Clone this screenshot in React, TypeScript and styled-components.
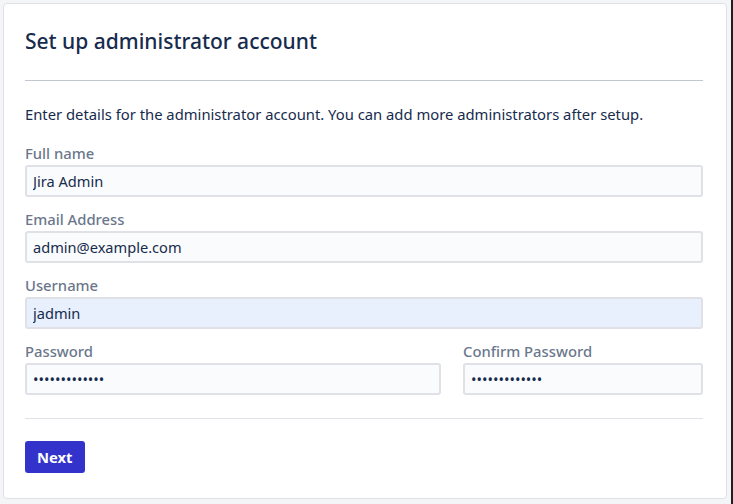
import React from "react";
import styled, { createGlobalStyle } from "styled-components";

const GlobalStyle = createGlobalStyle`
  html, body {
    margin: 0;
    padding: 0;
    background: #f4f5f7;
  }
  body {
    font-family: "Noto Sans", "Open Sans", sans-serif;
    color: #172b4d;
  }
`;

const Page = styled.div`
  box-sizing: border-box;
  width: 733px;
  height: 504px;
  padding: 3px 4px 5px 3px;
  border-right: 2px solid #1f1f1f;
`;

const Card = styled.section`
  box-sizing: border-box;
  height: 100%;
  background: #fff;
  border: 1px solid #dfe1e6;
  border-radius: 4px;
  padding: 25px 23px 25px 21px;
`;

const Title = styled.h1`
  margin: 0;
  font-size: 21px;
  line-height: 24px;
  font-weight: 500;
  color: #172b4d;
`;

const Divider = styled.hr<{ $tone?: "strong" | "soft" }>`
  align-self: stretch;
  border: 0;
  height: 1px;
  margin: 0;
  background: ${(p) => (p.$tone === "soft" ? "#dfe1e6" : "#c1c7d0")};
`;

const Header = styled.header`
  display: flex;
  flex-direction: column;
  gap: 27px;
  margin-bottom: 23px;
`;

const Intro = styled.p`
  margin: 0 0 19px;
  font-size: 14.8px;
  line-height: 20px;
  color: #172b4d;
`;

const Form = styled.form`
  display: flex;
  flex-direction: column;
  gap: 12px;
`;

const Row = styled.div`
  display: flex;
  gap: 22px;
`;

const Field = styled.label<{ $width?: number }>`
  display: flex;
  flex-direction: column;
  gap: 2px;
  flex: ${(p) => (p.$width ? `0 0 ${p.$width}px` : "1 1 auto")};
`;

const Label = styled.span`
  font-size: 14.8px;
  line-height: 20px;
  font-weight: 500;
  color: #6b778c;
`;

const Input = styled.input<{ $filled?: boolean }>`
  box-sizing: border-box;
  width: 100%;
  height: 32px;
  padding: 0 6px;
  border: 2px solid #dfe1e6;
  border-radius: 3px;
  background: ${(p) => (p.$filled ? "#e8f0fe" : "#fafbfc")};
  font-family: inherit;
  font-size: 14.6px;
  color: #172b4d;
  outline: none;
`;

const Footer = styled.footer`
  display: flex;
  flex-direction: column;
  align-items: flex-start;
  gap: 22px;
  margin-top: 23px;
`;

const Button = styled.button`
  height: 32px;
  padding: 0 12px;
  border: 0;
  border-radius: 3px;
  background: #3333cc;
  color: #fff;
  font-family: inherit;
  font-size: 14.8px;
  font-weight: 700;
  cursor: pointer;
`;

export default function App() {
  return (
    <>
      <GlobalStyle />
      <Page>
        <Card>
          <Header>
            <Title>Set up administrator account</Title>
            <Divider />
          </Header>
          <Intro>
            Enter details for the administrator account. You can add more
            administrators after setup.
          </Intro>
          <Form onSubmit={(e) => e.preventDefault()}>
            <Field>
              <Label>Full name</Label>
              <Input defaultValue="Jira Admin" />
            </Field>
            <Field>
              <Label>Email Address</Label>
              <Input defaultValue="admin@example.com" />
            </Field>
            <Field>
              <Label>Username</Label>
              <Input $filled defaultValue="jadmin" />
            </Field>
            <Row>
              <Field>
                <Label>Password</Label>
                <Input type="password" defaultValue="administrator" />
              </Field>
              <Field $width={240}>
                <Label>Confirm Password</Label>
                <Input type="password" defaultValue="administrator" />
              </Field>
            </Row>
          </Form>
          <Footer>
            <Divider $tone="soft" />
            <Button type="button">Next</Button>
          </Footer>
        </Card>
      </Page>
    </>
  );
}
